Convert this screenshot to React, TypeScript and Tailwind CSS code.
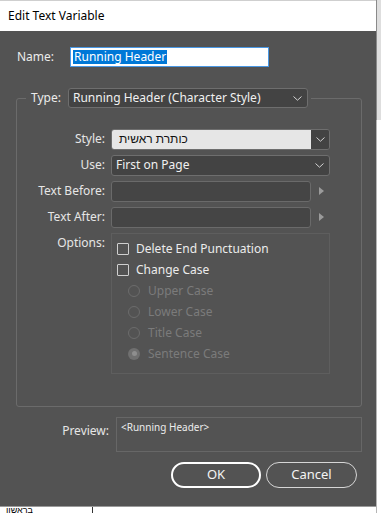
import React from "react";

const font = { fontFamily: '"Noto Sans", "Noto Sans CJK SC", sans-serif' };

function Chevron() {
  return (
    <svg width="9" height="5" viewBox="0 0 9 5" className="shrink-0">
      <polyline points="0.5,0.5 4.5,4.2 8.5,0.5" fill="none" stroke="#d4d4d4" strokeWidth="1" />
    </svg>
  );
}

function Arrow() {
  return (
    <svg width="5" height="8" viewBox="0 0 5 8" className="shrink-0">
      <polygon points="0,0 5,4 0,8" fill="#9b9b9b" />
    </svg>
  );
}

function Row({ label, children }: { label: string; children: React.ReactNode }) {
  return (
    <div className="flex items-center gap-[6px] h-[20px]">
      <div className="w-[88px] text-right text-[#e6e6e6] leading-[20px]">{label}</div>
      {children}
    </div>
  );
}

function Check({ label }: { label: string }) {
  return (
    <div className="flex items-center h-[21px] pl-[5px] gap-[7px]">
      <div className="w-[12px] h-[12px] border border-[#cfcfcf] rounded-[1px]" />
      <span className="text-[#ececec]">{label}</span>
    </div>
  );
}

function Radio({ label, checked }: { label: string; checked?: boolean }) {
  return (
    <div className="flex items-center h-[21px] pl-[16px] gap-[8px]">
      {checked ? (
        <div className="w-[12px] h-[12px] rounded-full bg-[#707070] flex items-center justify-center">
          <div className="w-[5px] h-[5px] rounded-full bg-[#8e8e8e]" />
        </div>
      ) : (
        <div className="w-[12px] h-[12px] rounded-full border border-[#6c6c6c]" />
      )}
      <span className="text-[#7b7b7b]">{label}</span>
    </div>
  );
}

export default function App() {
  return (
    <div className="w-[381px] h-[513px] bg-white flex overflow-hidden text-[12px]" style={font}>
      <div className="w-[376px] flex flex-col shrink-0">
        <div className="w-[376px] h-[507px] flex flex-col">
          <div className="h-[31px] bg-white flex items-center pl-[8px] text-black border-t border-[#cfcfcf]">
            Edit Text Variable
          </div>
          <div className="flex-1 bg-[#535353] flex flex-col">
            <div className="flex items-center pt-[16px] pl-[17px]">
              <span className="w-[53px] text-[#ececec]">Name:</span>
              <div className="w-[199px] h-[20px] bg-white border border-[#4a98e4] flex items-center pl-[2px]">
                <span className="bg-[#0078d7] text-white leading-[14px] px-[1px]">Running Header</span>
              </div>
            </div>
            <fieldset className="ml-[16px] mt-[21px] w-[346px] border border-[#6b6b6b] rounded-[3px] pb-[32px]">
              <legend className="ml-[9px] pl-[5px] pr-[3px]">
                <div className="flex items-center gap-[7px]">
                  <span className="text-[#ececec]">Type:</span>
                  <div className="w-[240px] h-[20px] bg-[#434343] border border-[#6e6e6e] rounded-[3px] flex items-center justify-between pl-[4px] pr-[5px]">
                    <span className="text-[#f0f0f0]">Running Header (Character Style)</span>
                    <Chevron />
                  </div>
                </div>
              </legend>
              <div className="pt-[21px] flex flex-col gap-[6px]">
                <Row label="Style:">
                  <div className="w-[219px] h-[21px] border border-[#6e6e6e] rounded-[3px] flex overflow-hidden">
                    <div className="flex-1 bg-[#e6e6e6] flex items-center pl-[7px] text-[#111]">כותרת ראשית</div>
                    <div className="w-[18px] bg-[#434343] flex items-center justify-center">
                      <Chevron />
                    </div>
                  </div>
                </Row>
                <Row label="Use:">
                  <div className="w-[219px] h-[21px] bg-[#434343] border border-[#6e6e6e] rounded-[3px] flex items-center justify-between pl-[4px] pr-[5px]">
                    <span className="text-[#f0f0f0]">First on Page</span>
                    <Chevron />
                  </div>
                </Row>
                <Row label="Text Before:">
                  <div className="w-[200px] h-[21px] bg-[#454545] border border-[#6a6a6a] rounded-[3px]" />
                  <div className="ml-[2px]"><Arrow /></div>
                </Row>
                <Row label="Text After:">
                  <div className="w-[200px] h-[21px] bg-[#454545] border border-[#6a6a6a] rounded-[3px]" />
                  <div className="ml-[2px]"><Arrow /></div>
                </Row>
                <div className="flex items-start gap-[6px]">
                  <div className="w-[88px] text-right text-[#e6e6e6] leading-[20px]">Options:</div>
                  <div className="w-[219px] h-[141px] border border-[#5e5e5e] pt-[4px] flex flex-col">
                    <Check label="Delete End Punctuation" />
                    <Check label="Change Case" />
                    <Radio label="Upper Case" />
                    <Radio label="Lower Case" />
                    <Radio label="Title Case" />
                    <Radio label="Sentence Case" checked />
                  </div>
                </div>
              </div>
            </fieldset>
            <div className="flex items-start mt-[10px] gap-[7px]">
              <div className="w-[109px] text-right text-[#e6e6e6] leading-[20px] pt-[4px]">Preview:</div>
              <div className="w-[246px] h-[35px] border border-[#676767] pl-[4px] pt-[2px] text-[10px] text-[#ececec]">
                &lt;Running Header&gt;
              </div>
            </div>
            <div className="flex justify-end gap-[5px] pr-[19px] mt-[10px]">
              <div className="w-[90px] h-[26px] rounded-full border-2 border-white flex items-center justify-center text-[13px] text-[#f4f4f4]">
                OK
              </div>
              <div className="w-[91px] h-[26px] rounded-full border border-[#d6d6d6] flex items-center justify-center text-[13px] text-[#f4f4f4]">
                Cancel
              </div>
            </div>
          </div>
        </div>
        <div className="flex-1 border-t border-[#9a9a9a] flex bg-white">
          <div className="w-[93px] border-r border-[#333] pl-[6px] text-[9px] leading-[6px] text-black text-left overflow-hidden">בראשון</div>
        </div>
      </div>
      <div className="flex-1 flex flex-col">
        <div className="h-[120px] bg-[#dedede] border-l border-[#8a8a8a]" />
        <div className="flex-1 border-l border-[#b5b5b5] bg-white" />
      </div>
    </div>
  );
}
